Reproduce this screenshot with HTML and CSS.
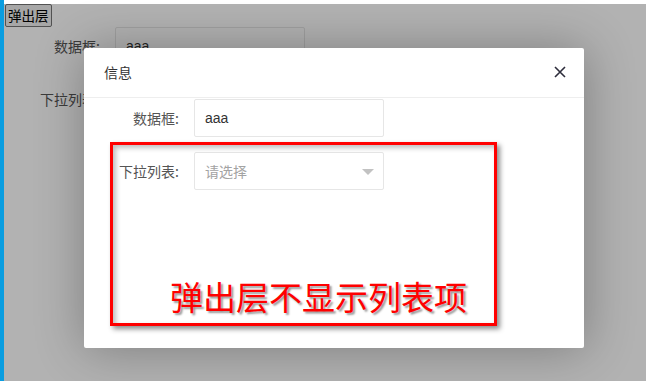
FILE: index.html
```html
<!DOCTYPE html>
<html lang="zh">
<head>
<meta charset="utf-8">
<title>弹出层</title>
<link rel="stylesheet" href="styles.css">
</head>
<body>
<div class="frame">
  <div class="edge"></div>
  <div class="viewport">
    <div class="topline"></div>
    <div class="page">
      <button class="btn" type="button">弹出层</button>
      <form class="form">
        <div class="item">
          <label class="label">数据框:</label>
          <div class="block"><input class="input" type="text" value="aaa"></div>
        </div>
        <div class="item">
          <label class="label">下拉列表:</label>
          <div class="block"><div class="select"><span class="ph">请选择</span><i class="caret"></i></div></div>
        </div>
      </form>
    </div>
  </div>

  <div class="shade"></div>

  <div class="layer">
    <div class="layer-title">信息
      <span class="close"><svg width="12" height="12" viewBox="0 0 12 12"><path d="M1 1L11 11M11 1L1 11" stroke="#2e2d3c" stroke-width="1.6" fill="none"/></svg></span>
    </div>
    <div class="layer-body">
      <div class="item">
        <label class="label">数据框:</label>
        <div class="block"><input class="input" type="text" value="aaa"></div>
      </div>
      <div class="item">
        <label class="label">下拉列表:</label>
        <div class="block"><div class="select"><span class="ph">请选择</span><i class="caret"></i></div></div>
      </div>
    </div>
  </div>

  <div class="note">
    <span class="note-text">弹出层不显示列表项</span>
  </div>
</div>
</body>
</html>
```

FILE: styles.css
```css
* { box-sizing: border-box; }
html, body { margin: 0; padding: 0; }
body {
  width: 646px;
  height: 381px;
  overflow: hidden;
  font-family: "Liberation Sans", "Noto Sans CJK SC", sans-serif;
  font-size: 14px;
  color: #333;
  background: #fff;
}
.frame {
  position: relative;
  display: flex;
  width: 646px;
  height: 381px;
}
.edge {
  width: 4px;
  flex: none;
  background: #0a9de0;
}
.viewport {
  flex: 1;
  display: flex;
  flex-direction: column;
}
.topline {
  height: 4px;
  flex: none;
  background: #fff;
}
.page {
  flex: 1;
  padding-left: 1px;
  background: #fff;
}
.btn {
  display: block;
  margin: 0;
  padding: 1px 2px;
  height: 23px;
  font-family: "Noto Sans CJK SC", sans-serif;
  font-size: 13.5px;
  line-height: 19px;
  color: #000;
  background: #efefef;
  border: 1px solid #767676;
  border-radius: 2px;
}
.form { margin: 0; }
.item {
  display: flex;
  margin-bottom: 15px;
}
.label {
  width: 110px;
  padding: 9px 15px;
  text-align: right;
  line-height: 20px;
  color: #555;
  font-family: "Noto Sans CJK SC", sans-serif;
  font-size: 14px;
}
.block { width: 190px; }
.input, .select {
  display: block;
  width: 190px;
  height: 38px;
  border: 1px solid #e6e6e6;
  border-radius: 2px;
  background: #fff;
  padding: 0 10px;
  font-family: "Liberation Sans", "Noto Sans CJK SC", sans-serif;
  font-size: 14px;
  color: #333;
  line-height: 36px;
  outline: none;
}
.select {
  position: relative;
}
.ph {
  color: #a3a3a3;
  font-family: "Noto Sans CJK SC", sans-serif;
}
.caret {
  position: absolute;
  right: 9px;
  top: 16px;
  width: 0;
  height: 0;
  border-left: 6px solid transparent;
  border-right: 6px solid transparent;
  border-top: 6px solid #c2c2c2;
}
.shade {
  position: absolute;
  left: 4px;
  top: 4px;
  right: 0;
  bottom: 0;
  background: rgba(0, 0, 0, 0.3);
}
.layer {
  position: absolute;
  left: 84px;
  top: 48px;
  width: 500px;
  height: 300px;
  background: #fff;
  box-shadow: 1px 1px 50px rgba(0, 0, 0, 0.3);
  border-radius: 2px;
}
.layer-title {
  position: relative;
  height: 50px;
  line-height: 49px;
  padding: 0 80px 0 20px;
  border-bottom: 1px solid #eee;
  font-family: "Noto Sans CJK SC", sans-serif;
  font-size: 14px;
  color: #333;
}
.close {
  position: absolute;
  right: 18px;
  top: 18px;
  width: 12px;
  height: 12px;
  display: flex;
}
.layer-body {
  padding-top: 1px;
}
.note {
  position: absolute;
  left: 110px;
  top: 142px;
  width: 387px;
  height: 184px;
  border: 3px solid #ff0000;
  box-shadow: 3px 3px 5px rgba(0, 0, 0, 0.45), inset 3px 3px 5px rgba(0, 0, 0, 0.25);
}
.note-text {
  position: absolute;
  left: 57px;
  top: 133px;
  font-family: "Noto Sans CJK SC", sans-serif;
  font-size: 33px;
  line-height: 36px;
  font-weight: 400;
  color: #ff0000;
  white-space: nowrap;
  text-shadow: 2px 2px 2px rgba(0, 0, 0, 0.4);
}
```
